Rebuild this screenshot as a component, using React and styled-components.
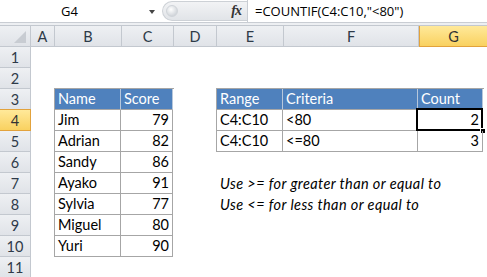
import React from 'react';
import styled, { createGlobalStyle, css } from 'styled-components';

const COLS = '31px 24px 67px 52px 43px 67px 135px 65px 1fr';
const LINE = '#C3C8CF';
const TLINE = '#A6A6A6';
const CELLFONT = 'Lato, "Liberation Sans", sans-serif';

const Global = createGlobalStyle`
  html, body { margin: 0; padding: 0; background: #fff; overflow: hidden; }
  body { font-family: ${CELLFONT}; }
  * { box-sizing: border-box; }
`;

const Screen = styled.div`
  width: 487px;
  height: 277px;
  overflow: hidden;
  background: #fff;
  display: flex;
  flex-direction: column;
`;

const FormulaBar = styled.div`
  flex: none;
  display: flex;
  height: 23px;
  border-bottom: 1px solid #C9CDD3;
  background: #fff;
`;

const NameBox = styled.div`
  width: 159px;
  flex: none;
  display: flex;
  align-items: center;
  justify-content: center;
  padding-right: 20px;
  position: relative;
  font-family: "Open Sans", "Liberation Sans", sans-serif;
  font-size: 13px;
  color: #000;
`;

const DropArrow = styled.span`
  position: absolute;
  left: 149px;
  top: 10px;
  width: 0;
  height: 0;
  border-left: 3.5px solid transparent;
  border-right: 3.5px solid transparent;
  border-top: 4px solid #444;
`;

const FxZone = styled.div`
  width: 88px;
  flex: none;
  display: flex;
  align-items: center;
  padding-left: 3px;
`;

const Pill = styled.div`
  flex: 1;
  height: 20px;
  display: flex;
  align-items: center;
  justify-content: space-between;
  border: 1px solid #CDD1D6;
  border-right: none;
  border-radius: 10px 0 0 10px;
  background: linear-gradient(#F2F3F5, #E1E4E8);
  padding: 0 6px 0 3px;
`;

const Knob = styled.span`
  width: 12px;
  height: 12px;
  border-radius: 50%;
  background: radial-gradient(circle at 40% 35%, #FFFFFF, #D3D7DC 70%);
  border: 1px solid #D0D4D9;
`;

const Fx = styled.span`
  font-family: "Liberation Serif", "DejaVu Serif", serif;
  font-style: italic;
  font-weight: bold;
  font-size: 14px;
  color: #333;
  letter-spacing: -1px;
`;

const FormulaInput = styled.div`
  flex: 1;
  display: flex;
  align-items: center;
  padding-left: 7px;
  border-left: 1px solid #C9CDD3;
  font-family: "Open Sans", "Liberation Sans", sans-serif;
  font-size: 13px;
  color: #000;
  white-space: nowrap;
`;

const Band = styled.div`
  flex: none;
  height: 2px;
  background: #EDEFF2;
`;

const ColHeaderRow = styled.div`
  flex: none;
  display: grid;
  grid-template-columns: ${COLS};
  height: 22px;
  border-top: 1px solid ${LINE};
`;

const headerBase = css`
  display: flex;
  align-items: center;
  justify-content: center;
  font-family: ${CELLFONT};
  font-size: 14.5px;
  color: #2E3A48;
  border-right: 1px solid ${LINE};
  border-bottom: 1px solid ${LINE};
  background: linear-gradient(#EEF0F3, #E0E3E8);
  ${(p) =>
    p.$active &&
    css`
      background: linear-gradient(#FFE99A, #F9D160);
      border: 1px solid #E2A23C;
      border-top: none;
      color: #333;
    `}
`;

const ColHead = styled.div`
  ${headerBase}
  ${(p) => p.$wide && css`grid-column: span 2; border-right: none;`}
`;

const Corner = styled.div`
  ${headerBase}
  justify-content: flex-end;
  align-items: flex-end;
  padding: 0 4px 3px 0;
`;

const Sheet = styled.div`
  flex: 1;
  display: grid;
  grid-template-columns: ${COLS};
  grid-template-rows: repeat(11, 21px);
`;

const RowHead = styled.div`
  ${headerBase}
  grid-column: 1;
  grid-row: ${(p) => p.$row};
  ${(p) => p.$active && css`border-left: none; border-top: 1px solid #E2A23C; margin-top: -1px; height: 22px;`}
`;

const Table = styled.div`
  grid-column: ${(p) => p.$cols};
  grid-row: ${(p) => p.$rows};
  margin: -1px 0 0 -1px;
  display: grid;
  grid-template-columns: ${(p) => p.$tracks};
  grid-auto-rows: 21px;
  border-left: 1px solid ${TLINE};
  border-top: 1px solid ${TLINE};
  align-self: start;
`;

const Cell = styled.div`
  position: relative;
  display: flex;
  align-items: flex-end;
  justify-content: ${(p) => (p.$num ? 'flex-end' : 'flex-start')};
  padding: 0 3px 2px 3px;
  border-right: 1px solid ${TLINE};
  border-bottom: 1px solid ${TLINE};
  font-family: ${CELLFONT};
  font-size: 14.5px;
  color: #000;
  white-space: nowrap;
  ${(p) =>
    p.$head &&
    css`
      background: #4F81BD;
      color: #fff;
      border-right-color: #B7C7DB;
    `}
`;

const Selection = styled.span`
  position: absolute;
  left: -2px;
  top: -2px;
  right: -1px;
  bottom: -1px;
  border: 2px solid #000;
  pointer-events: none;
`;

const FillHandle = styled.span`
  position: absolute;
  right: -4px;
  bottom: -4px;
  width: 6px;
  height: 6px;
  background: #000;
  border: 1px solid #fff;
`;

const Note = styled.div`
  grid-column: 6 / 10;
  grid-row: ${(p) => p.$row};
  display: flex;
  align-items: flex-end;
  padding: 0 0 2px 3px;
  font-family: ${CELLFONT};
  font-style: italic;
  font-size: 14.5px;
  letter-spacing: 0.4px;
  color: #000;
  white-space: nowrap;
`;

const scores = [
  ['Jim', 79],
  ['Adrian', 82],
  ['Sandy', 86],
  ['Ayako', 91],
  ['Sylvia', 77],
  ['Miguel', 80],
  ['Yuri', 90],
];

const letters = ['A', 'B', 'C', 'D', 'E', 'F'];

export default function App() {
  return (
    <Screen>
      <Global />
      <FormulaBar>
        <NameBox>
          G4
          <DropArrow />
        </NameBox>
        <FxZone>
          <Pill>
            <Knob />
            <Fx>fx</Fx>
          </Pill>
        </FxZone>
        <FormulaInput>=COUNTIF(C4:C10,"&lt;80")</FormulaInput>
      </FormulaBar>
      <Band />
      <ColHeaderRow>
        <Corner>
          <svg width="12" height="12" viewBox="0 0 12 12">
            <polygon points="12,0 12,12 0,12" fill="#C8CCD2" />
          </svg>
        </Corner>
        {letters.map((l) => (
          <ColHead key={l}>{l}</ColHead>
        ))}
        <ColHead $active $wide>G</ColHead>
      </ColHeaderRow>
      <Sheet>
        {Array.from({ length: 11 }, (_, i) => (
          <RowHead key={i} $row={i + 1} $active={i === 3}>
            {i + 1}
          </RowHead>
        ))}
        <Table $cols="3 / 5" $rows="3 / 11" $tracks="66px 52px">
          <Cell $head>Name</Cell>
          <Cell $head>Score</Cell>
          {scores.map(([n, s]) => (
            <React.Fragment key={n}>
              <Cell>{n}</Cell>
              <Cell $num>{s}</Cell>
            </React.Fragment>
          ))}
        </Table>
        <Table $cols="6 / 9" $rows="3 / 6" $tracks="66px 135px 65px">
          <Cell $head>Range</Cell>
          <Cell $head>Criteria</Cell>
          <Cell $head>Count</Cell>
          <Cell>C4:C10</Cell>
          <Cell>&lt;80</Cell>
          <Cell $num>
            2
            <Selection />
            <FillHandle />
          </Cell>
          <Cell>C4:C10</Cell>
          <Cell>&lt;=80</Cell>
          <Cell $num>3</Cell>
        </Table>
        <Note $row={7}>Use &gt;= for greater than or equal to</Note>
        <Note $row={8}>Use &lt;= for less than or equal to</Note>
      </Sheet>
    </Screen>
  );
}
